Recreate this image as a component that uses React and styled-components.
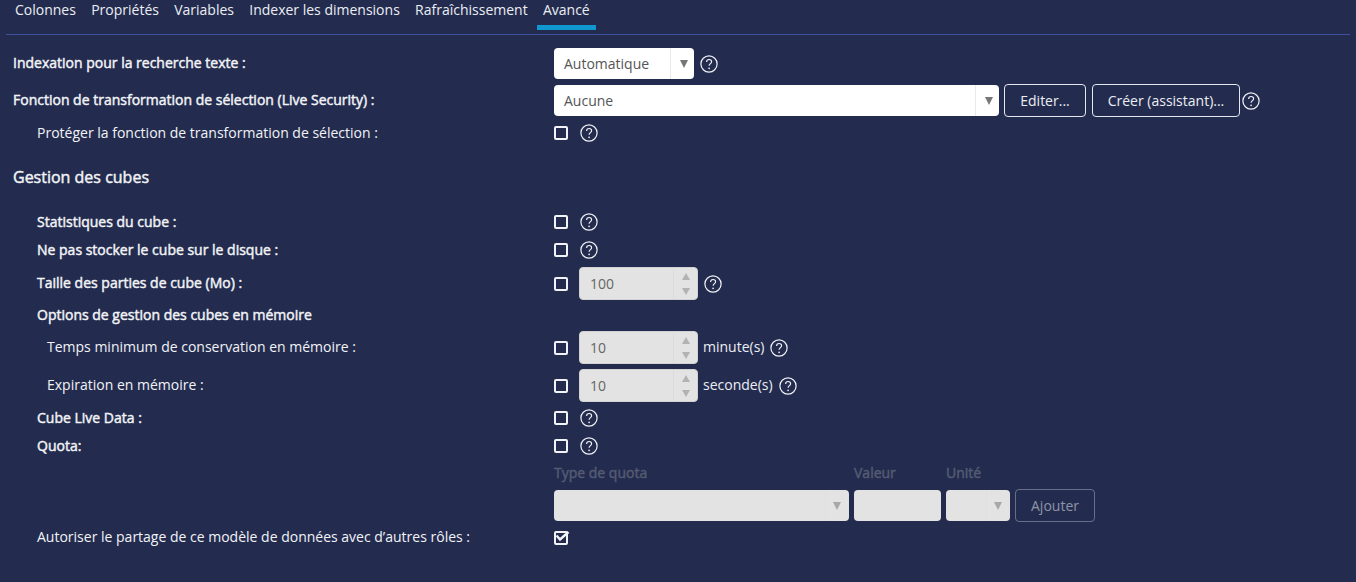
import React from "react";
import styled, { createGlobalStyle } from "styled-components";

const Global = createGlobalStyle`
  html, body { margin: 0; padding: 0; background: #232c4f; }
  body { font-family: "Open Sans", "Noto Sans", sans-serif; font-size: 14px; color: #f2f3f6; width: 1356px; height: 582px; overflow: hidden; }
`;
const Page = styled.div`
  width: 1356px;
  height: 582px;
  background: #232c4f;
  padding: 0 6px;
  box-sizing: border-box;
`;
const Tabs = styled.div`
  display: flex;
  height: 34px;
  border-bottom: 1px solid #3f4f9a;
  padding-left: 6px;
`;
const Tab = styled.div`
  height: 30px;
  box-sizing: border-box;
  padding: 0 6px 0 ${p => (p.$first ? 3 : 6)}px;
  margin-right: ${p => (p.$active ? 0 : 3.25)}px;
  line-height: 20px;
  white-space: nowrap;
  color: #eceef3;
  border-bottom: ${p => (p.$active ? "5px solid #0f97cf" : "none")};
`;
const Form = styled.div`
  padding: 13px 0 0 7px;
`;
const Row = styled.div`
  display: grid;
  grid-template-columns: 541px 1fr;
  align-items: center;
  height: ${p => p.$h}px;
  margin-top: ${p => p.$mt || 0}px;
`;
const Label = styled.div`
  padding-left: ${p => p.$indent || 0}px;
  -webkit-text-stroke: ${p => (p.$strong ? "0.45px #f2f3f6" : "0")};
  white-space: nowrap;
  color: #f2f3f6;
  position: relative;
  top: -1px;
`;
const Heading = styled.div`
  font-size: 16px;
  -webkit-text-stroke: 0.45px #f2f3f6;
  line-height: 22px;
  margin-top: 23px;
  color: #f2f3f6;
`;
const Controls = styled.div`
  display: flex;
  align-items: center;
`;
const Select = styled.div`
  width: ${p => p.$w}px;
  height: 31px;
  box-sizing: border-box;
  background: ${p => (p.$disabled ? "#e3e3e3" : "#fff")};
  border-radius: 4px;
  display: flex;
  align-items: center;
  justify-content: space-between;
  color: #555;
  padding-left: 10px;
`;
const Arrow = styled.div`
  width: 24px;
  height: 100%;
  padding-left: ${p => (p.$disabled ? 0 : 2)}px;
  padding-right: ${p => (p.$disabled ? 2 : 0)}px;
  border-left: 1px solid ${p => (p.$disabled ? "#e0e0e0" : "#e9e9e9")};
  box-sizing: border-box;
  display: flex;
  align-items: center;
  justify-content: center;
  &::after {
    content: "";
    border-left: 4px solid transparent;
    border-right: 4px solid transparent;
    border-top: 8px solid ${p => (p.$disabled ? "#a8a8a8" : "#777")};
    margin-top: 1px;
  }
`;
const Button = styled.div`
  width: ${p => p.$w}px;
  height: 33px;
  box-sizing: border-box;
  border: 1px solid ${p => (p.$disabled ? "#687089" : "#e6e8ef")};
  border-radius: 4px;
  color: ${p => (p.$disabled ? "#8f95a8" : "#eceef3")};
  display: flex;
  align-items: center;
  justify-content: center;
  margin-left: ${p => p.$ml || 0}px;
  margin-top: ${p => (p.$disabled ? -1 : 0)}px;
`;
const Check = styled.div`
  width: 10px;
  height: 10px;
  border: 2px solid #f2f3f6;
  border-radius: 2px;
  position: relative;
  flex: none;
  margin-right: 11px;
  margin-top: ${p => p.$mt || 0}px;
`;
const Tick = styled.svg`
  position: absolute;
  left: 0;
  top: -3px;
  overflow: visible;
`;
const Spinner = styled.div`
  width: 119px;
  height: 33px;
  background: #e3e3e3;
  border: 1px solid #d2d2d2;
  border-radius: 4px;
  box-sizing: border-box;
  display: flex;
  align-items: center;
  justify-content: space-between;
  padding-left: 10px;
  color: #666;
`;
const Steps = styled.div`
  width: 24px;
  height: 100%;
  border-left: 1px solid #dcdcdc;
  box-sizing: border-box;
  display: flex;
  flex-direction: column;
  align-items: center;
  justify-content: center;
  gap: 8px;
`;
const Up = styled.span`
  border-left: 4px solid transparent;
  border-right: 4px solid transparent;
  border-bottom: 7px solid #b2b2b2;
`;
const Down = styled.span`
  border-left: 4px solid transparent;
  border-right: 4px solid transparent;
  border-top: 7px solid #b2b2b2;
`;
const Unit = styled.span`
  margin-left: 5px;
  position: relative;
  top: -1px;
  color: #eceef3;
`;
const HelpIcon = styled.svg`
  flex: none;
  margin-left: ${p => p.$ml || 0}px;
`;
const QuotaGrid = styled.div`
  display: grid;
  grid-template-columns: 295px 87px 64px auto;
  column-gap: 5px;
  margin: 7px 0 0 541px;
  width: max-content;
`;
const QuotaLabel = styled.div`
  color: #555b72;
  -webkit-text-stroke: 0.45px #555b72;
  height: 27px;
  line-height: 20px;
`;
const QuotaInput = styled.div`
  height: 31px;
  background: #e3e3e3;
  border-radius: 4px;
`;

const Help = ({ ml }) => (
  <HelpIcon $ml={ml} width="18" height="18" viewBox="0 0 18 18" fill="none">
    <circle cx="9" cy="9" r="8.1" stroke="#f2f3f6" strokeWidth="1.2" />
    <path d="M6.6 7c0-1.5 1-2.5 2.5-2.5S11.6 5.500 11.600 6.700c0 1.900-2.500 2-2.500 4.100" stroke="#f2f3f6" strokeWidth="1.150" />
    <circle cx="9.100" cy="13.300" r=".85" fill="#f2f3f6" />
  </HelpIcon>
);

const Spin = ({ value }) => (
  <Spinner>
    {value}
    <Steps><Up /><Down /></Steps>
  </Spinner>
);

const tabs = ["Colonnes", "Propriétés", "Variables", "Indexer les dimensions", "Rafraîchissement"];

export default function App() {
  return (
    <Page>
      <Global />
      <Tabs>
        {tabs.map((t, i) => <Tab key={t} $first={i === 0}>{t}</Tab>)}
        <Tab $active>Avancé</Tab>
      </Tabs>
      <Form>
        <Row $h={31}>
          <Label $strong>Indexation pour la recherche texte :</Label>
          <Controls>
            <Select $w={140}>Automatique<Arrow /></Select>
            <Help ml={6} />
          </Controls>
        </Row>
        <Row $h={33} $mt={5}>
          <Label $strong>Fonction de transformation de sélection (Live Security) :</Label>
          <Controls>
            <Select $w={445}>Aucune<Arrow /></Select>
            <Button $w={82} $ml={5}>Editer...</Button>
            <Button $w={148} $ml={6}>Créer (assistant)...</Button>
            <Help ml={2} />
          </Controls>
        </Row>
        <Row $h={20} $mt={6}>
          <Label $indent={24}>Protéger la fonction de transformation de sélection :</Label>
          <Controls><Check /><Help ml={1} /></Controls>
        </Row>
        <Heading>Gestion des cubes</Heading>
        <Row $h={20} $mt={24}>
          <Label $indent={24} $strong>Statistiques du cube :</Label>
          <Controls><Check /><Help ml={1} /></Controls>
        </Row>
        <Row $h={20} $mt={8}>
          <Label $indent={24} $strong>Ne pas stocker le cube sur le disque :</Label>
          <Controls><Check /><Help ml={1} /></Controls>
        </Row>
        <Row $h={33} $mt={7}>
          <Label $indent={24} $strong>Taille des parties de cube (Mo) :</Label>
          <Controls><Check /><Spin value="100" /><Help ml={6} /></Controls>
        </Row>
        <Row $h={20} $mt={5}>
          <Label $indent={24} $strong>Options de gestion des cubes en mémoire</Label>
        </Row>
        <Row $h={33} $mt={6}>
          <Label $indent={34}>Temps minimum de conservation en mémoire :</Label>
          <Controls><Check /><Spin value="10" /><Unit>minute(s)</Unit><Help ml={6} /></Controls>
        </Row>
        <Row $h={33} $mt={5}>
          <Label $indent={34}>Expiration en mémoire :</Label>
          <Controls><Check /><Spin value="10" /><Unit>seconde(s)</Unit><Help ml={6} /></Controls>
        </Row>
        <Row $h={20} $mt={6}>
          <Label $indent={24} $strong>Cube Live Data :</Label>
          <Controls><Check /><Help ml={1} /></Controls>
        </Row>
        <Row $h={20} $mt={8}>
          <Label $indent={24} $strong>Quota:</Label>
          <Controls><Check /><Help ml={1} /></Controls>
        </Row>
        <QuotaGrid>
          <QuotaLabel>Type de quota</QuotaLabel>
          <QuotaLabel>Valeur</QuotaLabel>
          <QuotaLabel>Unité</QuotaLabel>
          <div />
          <Select $w={295} $disabled><span /><Arrow $disabled /></Select>
          <QuotaInput />
          <Select $w={64} $disabled><span /><Arrow $disabled /></Select>
          <Button $w={80} $disabled>Ajouter</Button>
        </QuotaGrid>
        <Row $h={20} $mt={5}>
          <Label $indent={24}>Autoriser le partage de ce modèle de données avec d’autres rôles :</Label>
          <Controls>
            <Check $mt={2}>
              <Tick width="15" height="14" viewBox="0 0 15 14" fill="none">
                <path d="M.5 5.500l3.500 4 8.500-7.500" stroke="#f2f3f6" strokeWidth="2.400" />
              </Tick>
            </Check>
          </Controls>
        </Row>
      </Form>
    </Page>
  );
}
